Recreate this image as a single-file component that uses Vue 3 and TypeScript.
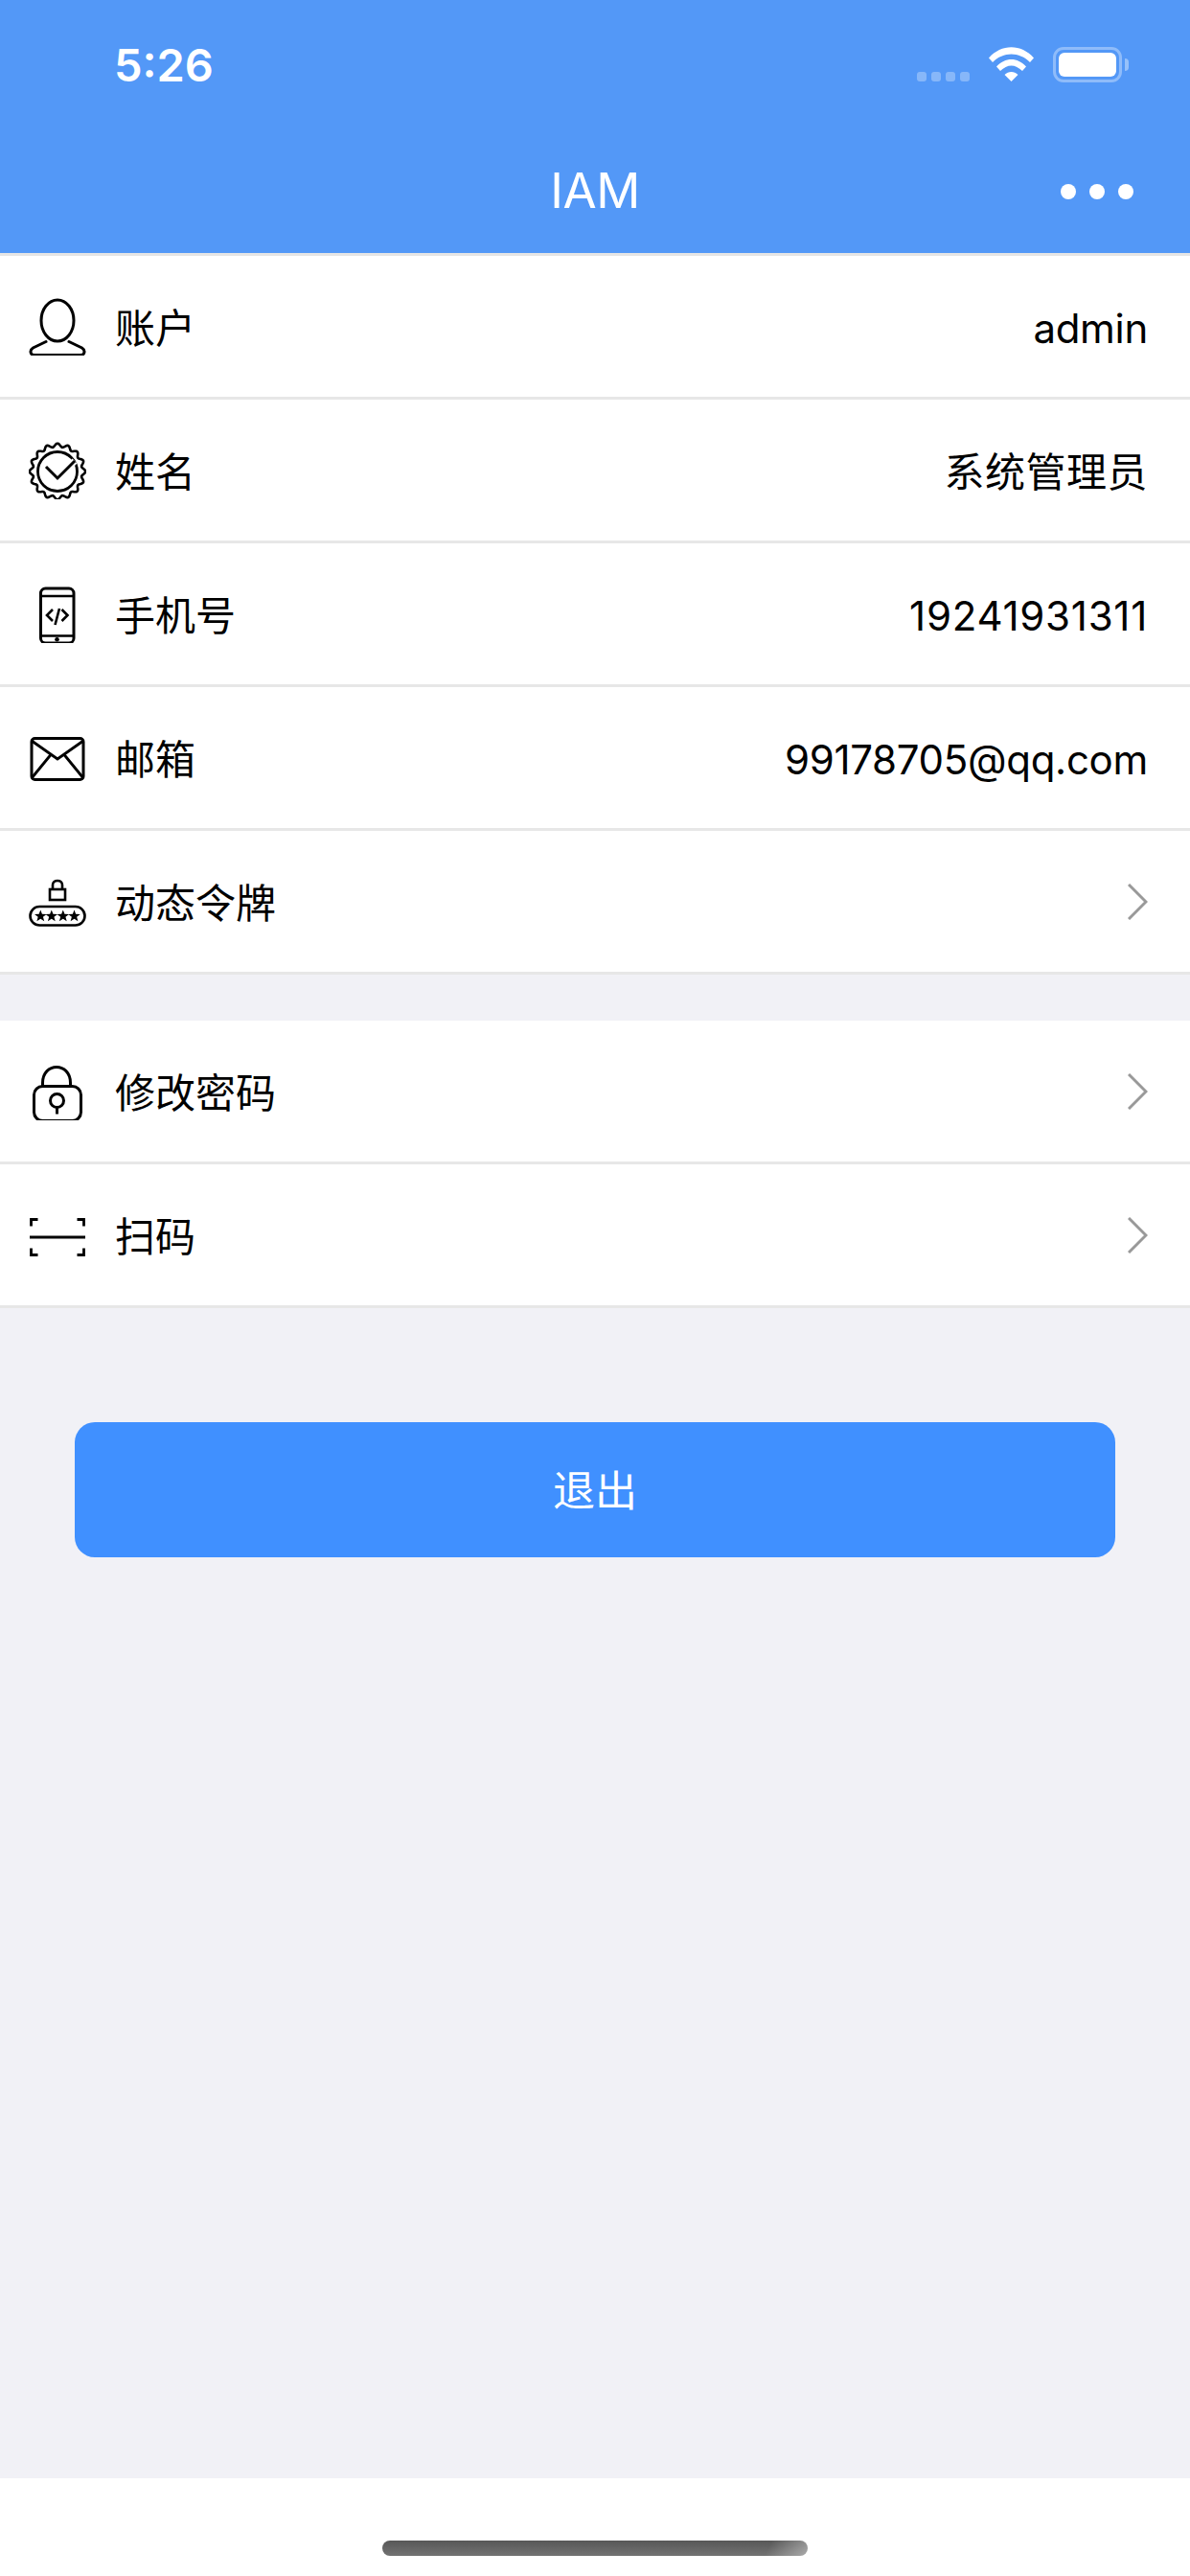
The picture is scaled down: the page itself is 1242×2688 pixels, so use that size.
<script setup lang="ts">
interface Row {
  icon: string;
  label: string;
  value?: string;
}

const groups: Row[][] = [
  [
    { icon: "user", label: "账户", value: "admin" },
    { icon: "badge", label: "姓名", value: "系统管理员" },
    { icon: "phone", label: "手机号", value: "19241931311" },
    { icon: "mail", label: "邮箱", value: "99178705@qq.com" },
    { icon: "token", label: "动态令牌" }
  ],
  [
    { icon: "lock", label: "修改密码" },
    { icon: "scan", label: "扫码" }
  ]
];

// scalloped edge of the badge icon
const badgePath = (() => {
  const pts: string[] = [];
  for (let i = 0; i < 192; i++) {
    const a = (i / 192) * Math.PI * 2;
    const r = 27.4 + 1.8 * Math.cos(16 * a);
    pts.push(`${(30 + r * Math.sin(a)).toFixed(2)} ${(31 - r * Math.cos(a)).toFixed(2)}`);
  }
  return `M${pts.join("L")}Z`;
})();

const starPath = (cx: number, cy: number, r: number) => {
  const pts: string[] = [];
  for (let i = 0; i < 10; i++) {
    const a = (i / 10) * Math.PI * 2;
    const d = i % 2 ? r * 0.42 : r;
    pts.push(`${(cx + d * Math.sin(a)).toFixed(2)} ${(cy - d * Math.cos(a)).toFixed(2)}`);
  }
  return `M${pts.join("L")}Z`;
};
const stars = [12.3, 23.8, 35.8, 47.5].map((x) => starPath(x, 45, 6.6));
</script>

<template>
  <div class="page">
    <header class="header">
      <div class="status">
        <span class="time">5:26</span>
        <div class="signal"><i></i><i></i><i></i><i></i></div>
        <svg class="wifi" width="47" height="36" viewBox="0 0 47 36">
          <path d="M0 11.5C13-3.5 34-3.5 47 11.5L43 16C32 4.5 15 4.5 4 16Z" fill="#fff" />
          <path d="M8 20.5C17 10.5 30 10.5 39 20.5L35 25C27.5 17.5 19.5 17.5 12 25Z" fill="#fff" />
          <path d="M16.5 29C20.5 25 26.500 25 30.500 29L23.500 36Z" fill="#fff" />
        </svg>
        <div class="battery"><b></b></div>
        <span class="nub"></span>
      </div>
      <div class="navbar">
        <h1>IAM</h1>
        <div class="more"><i></i><i></i><i></i></div>
      </div>
    </header>

    <main class="content">
      <section v-for="(group, g) in groups" :key="g" class="group">
        <div v-for="row in group" :key="row.label" class="row">
          <svg class="icon" width="60" height="60" viewBox="0 0 60 60" fill="none" stroke="#000" stroke-width="3">
            <template v-if="row.icon === 'user'">
              <ellipse cx="30" cy="23.5" rx="17" ry="21.500" />
              <path d="M18 45.500 4.500 52C.5 54.500 1.500 59.500 6 59.500H54C58.500 59.500 59.500 54.500 55.500 52L42 45.500" stroke-linecap="round" />
            </template>
            <template v-else-if="row.icon === 'badge'">
              <path :d="badgePath" stroke-width="2.600" />
              <circle cx="30" cy="31" r="20.500" stroke-width="2.800" />
              <path d="M18 26 30 38 48 20" fill="none" stroke="#fff" stroke-width="7" />
              <path d="M18 26 30 38 48 20" />
            </template>
            <template v-else-if="row.icon === 'phone'">
              <rect x="12.500" y="3" width="34.500" height="57" rx="5" />
              <path d="M12.500 11H47M12.500 52.500H47" stroke-width="2.600" />
              <circle cx="29.500" cy="56.300" r="2.300" fill="#000" stroke="none" />
              <path d="M25 25 19 31 25 37M34.500 25 40.500 31 34.500 37M32 24 27.500 41" stroke-width="2.600" />
            </template>
            <template v-else-if="row.icon === 'mail'">
              <rect x="3" y="9.500" width="54" height="43" rx="3.500" />
              <path d="M3 12 30 31 57 12M3 51 23 26.500M57 51 37 26.500" stroke-width="2.800" />
            </template>
            <template v-else-if="row.icon === 'token'">
              <rect x="22" y="17" width="16" height="11" stroke-width="2.600" />
              <path d="M25 17V12.500C25 6.500 35 6.500 35 12.500V17" stroke-width="2.600" />
              <rect x="1.500" y="35" width="57" height="19.500" rx="9.750" stroke-width="2.600" />
              <path v-for="(d, i) in stars" :key="i" :d="d" fill="#000" stroke="none" />
            </template>
            <template v-else-if="row.icon === 'lock'">
              <rect x="5.500" y="24.500" width="49" height="36" rx="9" />
              <path d="M14.500 24.500V21C14.500 -1 43.500 -1 43.500 21V24" />
              <circle cx="29.500" cy="39.500" r="7" />
              <path d="M29.500 46.500V53.500" />
            </template>
            <template v-else>
              <path d="M1 32H59" />
              <path d="M9.500 13.500H2.500V20.500M50.500 13.500H57.500V20.500M9.500 50.500H2.500V43.500M50.500 50.500H57.500V43.500" stroke-width="2.800" />
            </template>
          </svg>
          <span class="label">{{ row.label }}</span>
          <span v-if="row.value" class="value" :class="`value-${row.icon}`">{{ row.value }}</span>
          <svg v-else class="chevron" width="21" height="38" viewBox="0 0 21 38" fill="none" stroke="#999" stroke-width="3">
            <path d="M1 1 19 19 1 37" />
          </svg>
        </div>
      </section>

      <button class="logout" type="button">退出</button>
    </main>

    <footer class="footer"><span class="home"></span></footer>
  </div>
</template>

<style>
html,
body {
  margin: 0;
  background: #f1f1f6;
}
</style>

<style scoped>
.page {
  display: flex;
  flex-direction: column;
  width: 1242px;
  height: 2688px;
  overflow: hidden;
  background: #f1f1f6;
  font-family: Inter, "Noto Sans CJK SC", sans-serif;
  color: #000;
}

.header {
  box-sizing: border-box;
  height: 267px;
  flex: none;
  background: #5398f7;
  border-bottom: 3px solid #e5e5e5;
  color: #fff;
}

.status {
  display: flex;
  align-items: flex-start;
  height: 130px;
  padding-left: 119px;
}

.time {
  margin-top: 40px;
  width: 838px;
  font-size: 47px;
  line-height: 56px;
  font-weight: 600;
}

.signal {
  display: flex;
  gap: 5px;
  margin-top: 75px;
  width: 75px;
}

.signal i {
  width: 10px;
  height: 10px;
  border-radius: 3px;
  background: rgba(255, 255, 255, 0.3);
}

.wifi {
  margin-top: 49px;
}

.battery {
  box-sizing: border-box;
  width: 72px;
  height: 37px;
  margin: 49px 0 0 20px;
  padding: 3px;
  border: 3px solid rgba(255, 255, 255, 0.35);
  border-radius: 11px;
}

.battery b {
  display: block;
  height: 100%;
  border-radius: 6px;
  background: #fff;
}

.nub {
  width: 4px;
  height: 13px;
  margin: 61px 0 0 3px;
  border-radius: 0 4px 4px 0;
  background: rgba(255, 255, 255, 0.4);
}

.navbar {
  position: relative;
  display: flex;
  justify-content: center;
  align-items: center;
  height: 134px;
}

.navbar h1 {
  margin: 4px 0 0;
  font-size: 51px;
  line-height: 60px;
  font-weight: 400;
  letter-spacing: -0.5px;
}

.more {
  position: absolute;
  right: 59px;
  top: 62px;
  display: flex;
  gap: 14px;
}

.more i {
  width: 16px;
  height: 16px;
  border-radius: 50%;
  background: #fff;
}

.content {
  flex: 1;
}

.group {
  margin-bottom: 48px;
  background: #fff;
}

.group:last-of-type {
  margin-bottom: 0;
}

.row {
  box-sizing: border-box;
  display: flex;
  align-items: center;
  height: 150px;
  padding: 0 44px 0 30px;
  border-bottom: 3px solid #e7e7e7;
}

.label {
  flex: 1;
  margin: 4px 0 0 30px;
  font-size: 42px;
  line-height: 56px;
}

.value {
  margin-top: 4px;
  font-size: 42px;
  line-height: 56px;
  letter-spacing: -0.3px;
}

.value-badge {
  letter-spacing: 0.5px;
}

.value-phone {
  letter-spacing: 0.75px;
}

.logout {
  display: block;
  box-sizing: border-box;
  width: 1086px;
  height: 141px;
  margin: 119px auto 0;
  padding-top: 3px;
  border: 0;
  border-radius: 21px;
  background: #4090ff;
  color: #fff;
  font: 400 44px/56px Inter, "Noto Sans CJK SC", sans-serif;
}

.footer {
  display: flex;
  justify-content: center;
  height: 102px;
  flex: none;
  padding-top: 65px;
  box-sizing: border-box;
  background: #fff;
}

.home {
  width: 444px;
  height: 16px;
  border-radius: 8px;
  background:
    linear-gradient(115deg, rgba(255, 255, 255, 0) 90%, rgba(255, 255, 255, 0.4) 100%),
    linear-gradient(180deg, #575757, #727272);
}
</style>
